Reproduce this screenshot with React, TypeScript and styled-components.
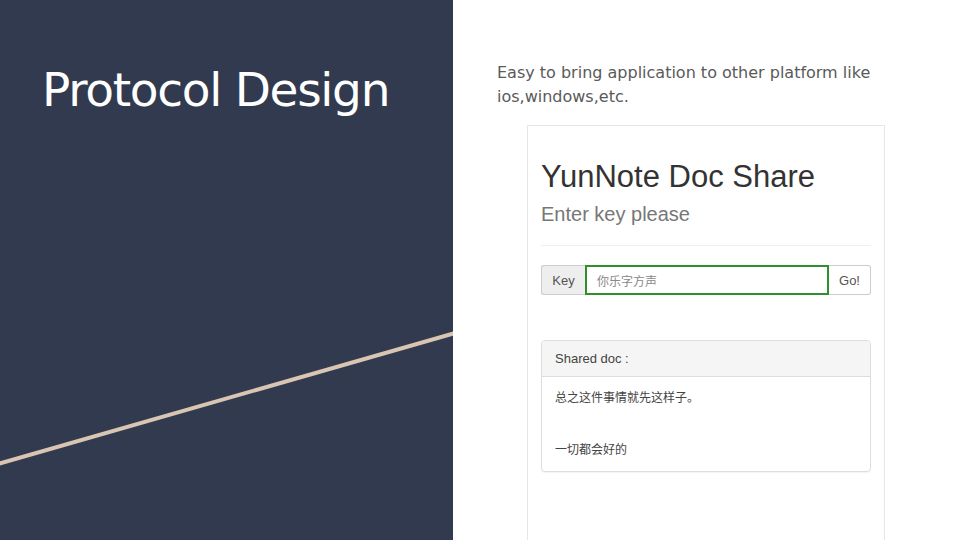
import React from "react";
import styled, { createGlobalStyle } from "styled-components";

const Global = createGlobalStyle`
  html, body { margin: 0; padding: 0; background: #ffffff; }
  body { width: 960px; height: 540px; overflow: hidden; }
`;

const Slide = styled.div`
  display: flex;
  width: 960px;
  height: 540px;
  overflow: hidden;
  background: #ffffff;
`;

const LeftPanel = styled.div`
  position: relative;
  flex: 0 0 453px;
  height: 540px;
  background: #313a4e;
  padding: 62px 0 0 42px;
  box-sizing: border-box;
`;

const Title = styled.h1`
  margin: 0;
  font-family: "Comic Sans MS", "DejaVu Sans", sans-serif;
  font-weight: normal;
  font-size: 47px;
  line-height: 1.2;
  color: #ffffff;
  letter-spacing: -1.3px;
`;

const Decor = styled.svg`
  position: absolute;
  left: 0;
  top: 0;
  width: 453px;
  height: 540px;
`;

const RightPanel = styled.div`
  flex: 1;
  display: flex;
  flex-direction: column;
  padding: 61px 0 0 44px;
  box-sizing: border-box;
`;

const Lead = styled.p`
  margin: 0;
  width: 400px;
  font-family: "Comic Sans MS", "DejaVu Sans", sans-serif;
  font-size: 16px;
  line-height: 24px;
  color: #5a5a5a;
`;

const Shot = styled.div`
  margin: 16px 0 0 30px;
  width: 358px;
  flex: 1;
  border: 1px solid #e6e6e6;
  border-bottom: none;
  box-sizing: border-box;
  padding: 0 13px;
  font-family: "Liberation Sans", Arial, "Noto Sans CJK SC", sans-serif;
  color: #333333;
`;

const ShotTitle = styled.h2`
  margin: 34px 0 0;
  font-weight: normal;
  font-size: 31px;
  line-height: 34px;
  color: #333333;
`;

const ShotSub = styled.h3`
  margin: 9px 0 0;
  font-weight: normal;
  font-size: 20px;
  line-height: 22px;
  color: #777777;
`;

const Rule = styled.div`
  margin-top: 20px;
  border-top: 1px solid #eeeeee;
`;

const InputGroup = styled.div`
  display: flex;
  height: 30px;
  margin-top: 19px;
  font-size: 13px;
`;

const Addon = styled.div`
  flex: 0 0 44px;
  display: flex;
  align-items: center;
  justify-content: center;
  background: #eeeeee;
  border: 1px solid #cccccc;
  border-right: none;
  border-radius: 3px 0 0 3px;
  box-sizing: border-box;
  color: #555555;
`;

const Field = styled.div`
  flex: 1;
  display: flex;
  align-items: center;
  padding-left: 10px;
  border: 2px solid #2f8f2f;
  box-sizing: border-box;
  color: #888888;
  font-family: "Noto Sans CJK SC", sans-serif;
  font-size: 12px;
`;

const GoButton = styled.div`
  flex: 0 0 42px;
  display: flex;
  align-items: center;
  justify-content: center;
  background: #ffffff;
  border: 1px solid #cccccc;
  border-left: none;
  border-radius: 0 3px 3px 0;
  box-sizing: border-box;
  color: #555555;
`;

const Panel = styled.div`
  margin-top: 45px;
  border: 1px solid #dddddd;
  border-radius: 4px;
  box-shadow: 0 1px 1px rgba(0, 0, 0, 0.05);
  overflow: hidden;
`;

const PanelHeading = styled.div`
  height: 35px;
  display: flex;
  align-items: center;
  padding-left: 13px;
  background: #f5f5f5;
  border-bottom: 1px solid #dddddd;
  font-size: 13px;
  color: #444444;
`;

const PanelBody = styled.div`
  padding: 10px 13px 12px;
  font-family: "Noto Sans CJK SC", sans-serif;
  font-size: 12px;
  line-height: 20px;
  color: #444444;
`;

const BodyLine = styled.p<{ $gap?: number }>`
  margin: ${(p) => (p.$gap ? `${p.$gap}px` : "0")} 0 0;
`;

export default function App() {
  return (
    <>
      <Global />
      <Slide>
        <LeftPanel>
          <Title>Protocol Design</Title>
          <Decor viewBox="0 0 453 540">
            <line x1="-2" y1="464" x2="455" y2="333" stroke="#d9c5b2" strokeWidth="4" />
          </Decor>
        </LeftPanel>
        <RightPanel>
          <Lead>Easy to bring application to other platform like ios,windows,etc.</Lead>
          <Shot>
            <ShotTitle>YunNote Doc Share</ShotTitle>
            <ShotSub>Enter key please</ShotSub>
            <Rule />
            <InputGroup>
              <Addon>Key</Addon>
              <Field>你乐字方声</Field>
              <GoButton>Go!</GoButton>
            </InputGroup>
            <Panel>
              <PanelHeading>Shared doc :</PanelHeading>
              <PanelBody>
                <BodyLine>总之这件事情就先这样子。</BodyLine>
                <BodyLine $gap={32}>一切都会好的</BodyLine>
              </PanelBody>
            </Panel>
          </Shot>
        </RightPanel>
      </Slide>
    </>
  );
}
